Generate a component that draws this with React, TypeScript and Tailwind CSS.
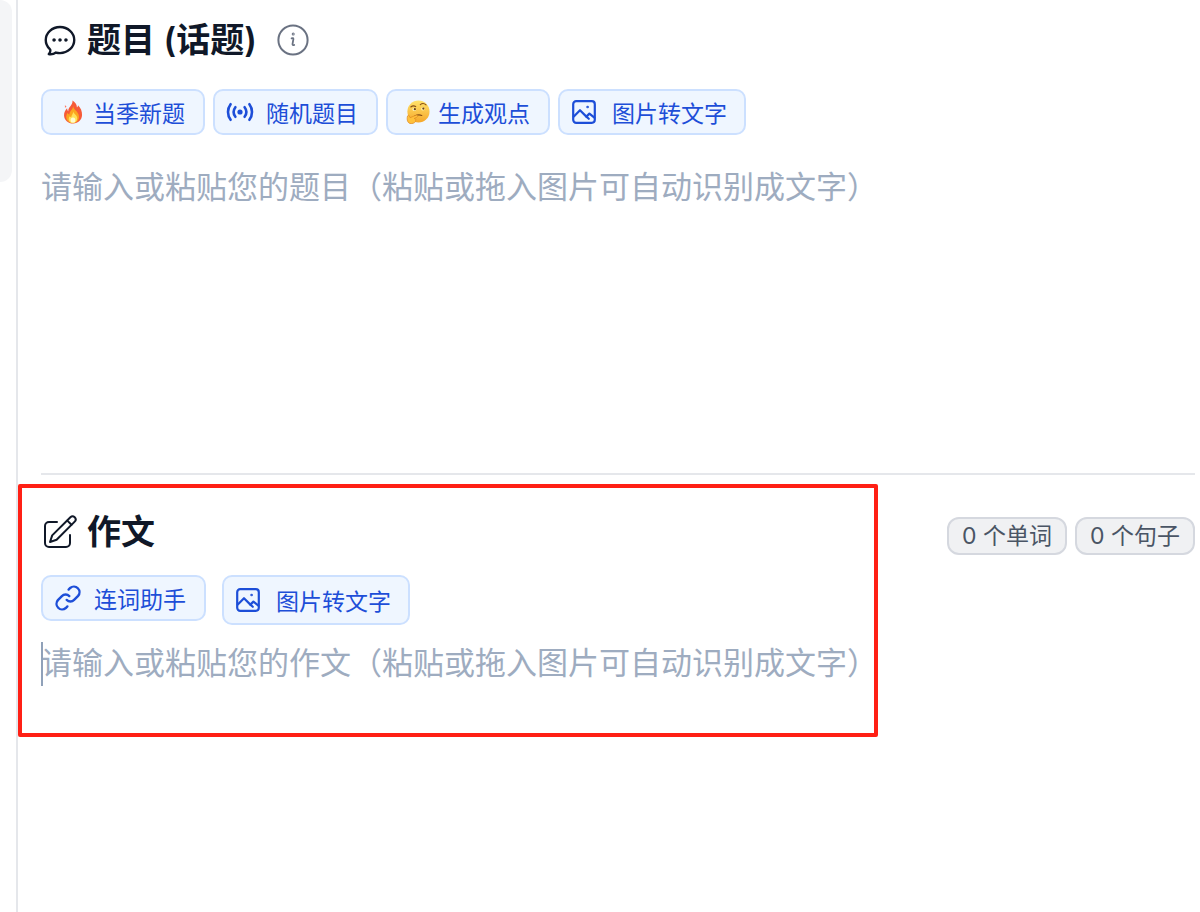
import { useEffect, useState } from "react";
import type { ReactNode } from "react";
import { HiOutlineChatBubbleOvalLeftEllipsis } from "react-icons/hi2";

function InfoIcon() {
  return (
    <svg viewBox="0 0 32 32" className="size-8" fill="none" stroke="currentColor" strokeWidth="2" strokeLinecap="round" strokeLinejoin="round" aria-hidden="true">
      <circle cx="16" cy="16" r="14.6" />
      <path d="M14.6 14.4q1.9-.9 1.8.8l-.9 4.9q-.1 1.5 1.7.9" strokeWidth="1.8" />
      <circle cx="16.2" cy="9.9" r=".5" />
    </svg>
  );
}

function EditIcon() {
  return (
    <svg viewBox="0 0 34 34" className="size-[34px]" fill="none" stroke="currentColor" strokeWidth="2" strokeLinecap="round" strokeLinejoin="round" aria-hidden="true">
      <path d="M14 7H6a4 4 0 0 0-4 4v17a4 4 0 0 0 4 4h17a4 4 0 0 0 4-4v-8" />
      <path d="M7 27l2.2-6.6L27.4 2.3a3 3 0 0 1 4.3 4.3L13.6 24.8z" />
      <path d="M24.3 5.6l4.2 4.2" />
    </svg>
  );
}

function RandomIcon() {
  return (
    <svg viewBox="0 0 28 24" className="h-6 w-7" fill="none" stroke="currentColor" strokeWidth="2.6" strokeLinecap="round" aria-hidden="true">
      <path d="M4.6 4.2a13 13 0 0 0 0 15.6M9.4 7.2a8 8 0 0 0 0 9.6M18.6 7.2a8 8 0 0 1 0 9.6M23.4 4.2a13 13 0 0 1 0 15.6" />
      <circle cx="14" cy="12" r="2.6" fill="currentColor" stroke="none" />
    </svg>
  );
}

function LinkIcon() {
  return (
    <svg viewBox="0 0 28 28" className="size-7" fill="none" stroke="currentColor" strokeWidth="2.4" strokeLinecap="round" aria-hidden="true">
      <path d="M14.6 5.6l1.6-1.6a5.6 5.6 0 0 1 7.9 7.9l-4 4a5.2 5.2 0 0 1-7.4 0" />
      <path d="M13.4 22.4l-1.6 1.6a5.6 5.6 0 0 1-7.9-7.9l4-4a5.2 5.2 0 0 1 7.4 0" />
    </svg>
  );
}

function PictureIcon() {
  return (
    <svg viewBox="0 0 24 24" className="size-6" fill="none" stroke="currentColor" strokeWidth="2.2" strokeLinecap="round" strokeLinejoin="round" aria-hidden="true">
      <rect x="1.2" y="1.2" width="21.6" height="21.6" rx="3" />
      <path d="M1.8 16.6l6.2-6.4 6.4 6.4 3-3 5 4" />
      <path d="M14.4 16.6l2.4 2.2" />
      <circle cx="15.6" cy="7" r=".5" strokeWidth="1.6" />
    </svg>
  );
}

function FireIcon() {
  return (
    <svg viewBox="0 0 24 26" className="h-6 w-6" aria-hidden="true">
      <path d="M11.5.6c3 2 4.6 4.4 4.8 7.4.8-.5 1.1-1.3 1.1-2.3 3.2 3 4.5 6.8 4.4 10.6-.2 5.4-4.1 9.1-9.6 9.1s-9.700-3.600-9.900-8.700c-.1-3.300 1.300-5.500 3.300-7.700.1 1.500.5 2.500 1.300 3.200C6.600 7.700 11.800 6.100 11.500.6z" fill="#f65a38" />
      <path d="M12.2 6.5c.2 4 4.4 5 5.800 9.300 1.700 5-1.500 9.100-5.900 9.100-4.600 0-7.700-3-7.400-7 .1-1.600.6-3 1.500-4.200.4 1.100 1 1.700 1.900 2 .1-3.900 3.800-5.100 4.100-9.200z" fill="#fca51f" />
      <path d="M12.4 12.5c.2 2.700 4.600 4.100 4.200 7.900-.3 2.800-2.200 4.700-4.700 4.700s-4.600-1.800-4.600-4.300c0-1.200.5-2.300 1.300-3.100.4.7.9 1 1.500 1 .2-2.200 2.100-3.600 2.300-6.200z" fill="#ffe15a" />
      <ellipse cx="12" cy="21.7" rx="2.6" ry="2.8" fill="#fffbd0" />
      <path d="M3.2 5.5l1.8 1.7-1.7 1.3z" fill="#ff765b" />
    </svg>
  );
}

function ThinkingIcon() {
  return (
    <svg viewBox="0 0 26 26" className="size-6" aria-hidden="true">
      <defs>
        <linearGradient id="face" x1="0" y1="0" x2="0" y2="1">
          <stop offset="0" stopColor="#ffe36b" />
          <stop offset="1" stopColor="#f6a72a" />
        </linearGradient>
      </defs>
      <circle cx="13.5" cy="12.5" r="12" fill="url(#face)" />
      <path d="M5.2 7.6q2.5-2.1 5.3-.5M15.5 5q3-2.6 6.2.2M9.5 17.3q4-2.1 7.6-.6" fill="none" stroke="#875016" strokeWidth="1.2" strokeLinecap="round" />
      <ellipse cx="9" cy="10.2" rx="2" ry="1.7" fill="#fff0b0" />
      <ellipse cx="18.3" cy="9.6" rx="2" ry="1.7" fill="#fff0b0" />
      <circle cx="9.6" cy="9.9" r="1.2" fill="#6b4317" />
      <circle cx="18.8" cy="9.3" r="1.2" fill="#6b4317" />
      <path d="M1.7 17.2c1-1 2-.5 2.2.7l.5 1.3 6.400-2.700c1.800-.6 2.500 1.300 1 2.100l-3 1.500c2.100.2 2.300 1.300 1.600 2.200.3 1.700-1.900 3.300-4.800 3.300-3.800 0-5.100-4.100-3.900-8.400z" fill="#ffc13b" stroke="#e08a22" strokeWidth=".8" />
    </svg>
  );
}

type ActionButtonProps = {
  icon: ReactNode;
  label: string;
  className: string;
};

function ActionButton({ icon, label, className }: ActionButtonProps) {
  return (
    <button
      type="button"
      className={`flex items-center rounded-[10px] border-2 border-[#cce0ff] bg-[#eff6ff] text-[23px] leading-8 text-[#1d4ed8] ${className}`}
    >
      {icon}
      <span className="pt-[3px]">{label}</span>
    </button>
  );
}

function CountBadge({ children }: { children: ReactNode }) {
  return (
    <span className="rounded-[12px] border-2 border-[#d5d8df] bg-[#f0f1f3] px-[13px] text-[23px] leading-[34px] whitespace-nowrap text-gray-600">
      {children}
    </span>
  );
}

export default function App() {
  const [topic, setTopic] = useState("");
  const [essay, setEssay] = useState("");

  useEffect(() => {
    document.documentElement.lang = "zh-CN";
  }, []);

  const words = essay.split(/\s+/).filter(Boolean).length;
  const sentences = essay.split(/[.!?。！？]+/).filter((s) => s.trim()).length;

  return (
    <div className="flex min-h-screen bg-white font-['Inter','Noto_Sans_CJK_SC',sans-serif]">
      <aside className="w-4 shrink-0">
        <div className="h-[182px] w-3 rounded-r-[16px] bg-[#f4f5f7]" />
      </aside>

      <main className="min-w-0 flex-1 border-l-2 border-gray-200">
        <section className="mr-[5px] ml-[23px] flex h-[475px] flex-col border-b-2 border-gray-200 pt-4">
          <header className="flex h-12 items-center text-gray-900">
            <HiOutlineChatBubbleOvalLeftEllipsis className="mr-2 size-[38px]" />
            <label htmlFor="topic" className="text-[34px] leading-12 font-semibold">
              题目 (话题)
            </label>
            <button type="button" aria-label="说明" className="ml-5 text-gray-500">
              <InfoIcon />
            </button>
          </header>

          <div className="mt-[25px] flex items-end gap-2">
            <ActionButton icon={<FireIcon />} label="当季新题" className="h-[46px] gap-2 px-[18px]" />
            <ActionButton icon={<RandomIcon />} label="随机题目" className="h-[46px] gap-3 pr-[18px] pl-[11px]" />
            <ActionButton icon={<ThinkingIcon />} label="生成观点" className="h-[46px] gap-2 px-[18px]" />
            <ActionButton icon={<PictureIcon />} label="图片转文字" className="h-[46px] gap-4 pr-[17px] pl-3" />
          </div>

          <textarea
            id="topic"
            value={topic}
            onChange={(e) => setTopic(e.target.value)}
            placeholder="请输入或粘贴您的题目（粘贴或拖入图片可自动识别成文字）"
            className="mt-[30px] w-full flex-1 resize-none text-[31px] leading-11 text-gray-900 outline-none placeholder:text-[#9eacc0]"
          />
        </section>

        <section className="relative pt-[33px] pr-[5px] pl-[23px]">
          <div className="flex items-start justify-between">
            <header className="flex h-12 items-center gap-2.5 pl-0.5 text-gray-900">
              <EditIcon />
              <label htmlFor="essay" className="text-[34px] leading-12 font-semibold">
                作文
              </label>
            </header>
            <div className="flex gap-2 pt-[9px]">
              <CountBadge>{words} 个单词</CountBadge>
              <CountBadge>{sentences} 个句子</CountBadge>
            </div>
          </div>

          <div className="mt-[19px] flex items-start gap-4">
            <ActionButton icon={<LinkIcon />} label="连词助手" className="h-[46px] gap-3 pr-[18px] pl-[11px]" />
            <ActionButton icon={<PictureIcon />} label="图片转文字" className="h-[50px] gap-4 pr-[17px] pl-3" />
          </div>

          <textarea
            id="essay"
            value={essay}
            onChange={(e) => setEssay(e.target.value)}
            placeholder="请输入或粘贴您的作文（粘贴或拖入图片可自动识别成文字）"
            className="mt-4 h-[220px] w-full resize-none text-[31px] leading-11 text-gray-900 outline-none placeholder:text-[#9eacc0]"
          />

          {/* text cursor */}
          <span className="absolute top-[167px] left-[23px] h-11 w-[2px] bg-slate-400" />

          {/* highlighted area */}
          <div className="pointer-events-none absolute top-[9px] left-0 h-[253px] w-[860px] rounded-[2px] border-4 border-[#ff2015]" />
        </section>
      </main>
    </div>
  );
}
